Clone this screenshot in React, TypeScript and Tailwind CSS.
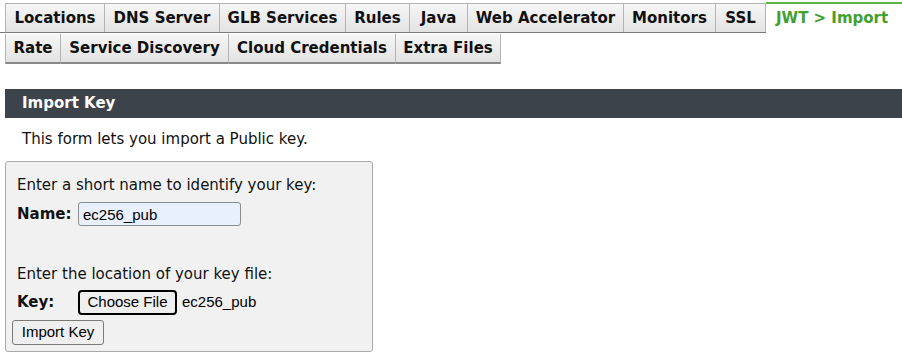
import React from "react";

const row1: [string, number][] = [
  ["Locations", 100],
  ["DNS Server", 116],
  ["GLB Services", 127],
  ["Rules", 65],
  ["Java", 59],
  ["Web Accelerator", 157],
  ["Monitors", 93],
  ["SSL", 51],
];
const row2: [string, number][] = [
  ["Rate", 56],
  ["Service Discovery", 169],
  ["Cloud Credentials", 168],
  ["Extra Files", 106],
];

function Tab({ label, w }: { label: string; w: number }) {
  return (
    <div
      style={{ width: w }}
      className="h-full flex items-center justify-center border-l border-t border-r border-[#b4b4b4] -ml-px first:ml-0 bg-gradient-to-b from-[#f6f6f6] to-[#e3e3e3] text-[15px] font-bold text-[#111]"
    >
      {label}
    </div>
  );
}

export default function App() {
  return (
    <div className="w-[902px] h-[355px] bg-white overflow-hidden" style={{ fontFamily: '"DejaVu Sans", Verdana, sans-serif' }}>
      {/* Tabs row 1 */}
      <div className="pt-[3px] h-[33px] flex border-b border-[#7a7a7a] pl-[5px]">
        {row1.map(([l, w]) => (
          <Tab key={l} label={l} w={w} />
        ))}
        <div className="flex-1 h-[31px] -mt-[1px] mb-[-1px] flex items-center pl-[10px] bg-white border-t-[2px] border-[#5cb544] text-[15px] font-bold text-[#43a02f] relative z-10">
          JWT &gt; Import
        </div>
      </div>
      {/* Tabs row 2 */}
      <div className="h-[31px] flex pl-[5px] pt-[1px]">
        {row2.map(([l, w]) => (
          <div
            key={l}
            style={{ width: w }}
            className="h-full flex items-center justify-center border-l border-r border-b-2 border-[#b4b4b4] border-b-[#8a8a8a] -ml-px first:ml-0 bg-gradient-to-b from-[#f6f6f6] to-[#e3e3e3] text-[15px] font-bold text-[#111]"
          >
            {l}
          </div>
        ))}
      </div>

      {/* Header */}
      <div className="mt-[25px] ml-[5px] h-[29px] bg-[#3c434b] flex items-center pl-[17px] text-white text-[15px] font-bold">
        Import Key
      </div>
      <div className="pl-[22px] pt-[10px] h-[43px] text-[15px] text-[#111]">
        This form lets you import a Public key.
      </div>

      {/* Form box */}
      <div className="ml-[5px] w-[368px] h-[191px] bg-[#f1f1f1] border border-[#a9a9a9] rounded-[3px] pl-[11px] pt-[12px] text-[15px] text-[#111]">
        <div className="h-[22px] leading-[22px]">Enter a short name to identify your key:</div>
        <div className="flex items-center mt-[6px] h-[24px]">
          <span className="w-[61px] font-bold">Name:</span>
          <input
            readOnly
            value="ec256_pub"
            className="w-[163px] h-[24px] bg-[#e8f0fe] border border-[#8c8c8c] rounded-[3px] px-[4px] text-[15px] text-black outline-none"
            style={{ fontFamily: '"Liberation Sans", Arial, sans-serif' }}
          />
        </div>
        <div className="h-[22px] leading-[22px] mt-[37px]">Enter the location of your key file:</div>
        <div className="flex items-center mt-[5px] h-[25px]">
          <span className="w-[61px] font-bold">Key:</span>
          <div
            className="flex items-center gap-[5px]"
            style={{ fontFamily: '"Liberation Sans", Arial, sans-serif' }}
          >
            <span className="h-[25px] w-[99px] flex items-center justify-center border-2 border-black rounded-[4px] bg-[#efefef] text-[15px] text-black">
              Choose File
            </span>
            <span className="text-[15px] text-black">ec256_pub</span>
          </div>
        </div>
        <div className="mt-[5px] -ml-[5px]" style={{ fontFamily: '"Liberation Sans", Arial, sans-serif' }}>
          <span className="inline-flex h-[25px] w-[92px] items-center justify-center border border-[#7a7a7a] rounded-[3px] bg-[#efefef] text-[15px] text-black">
            Import Key
          </span>
        </div>
      </div>
    </div>
  );
}
